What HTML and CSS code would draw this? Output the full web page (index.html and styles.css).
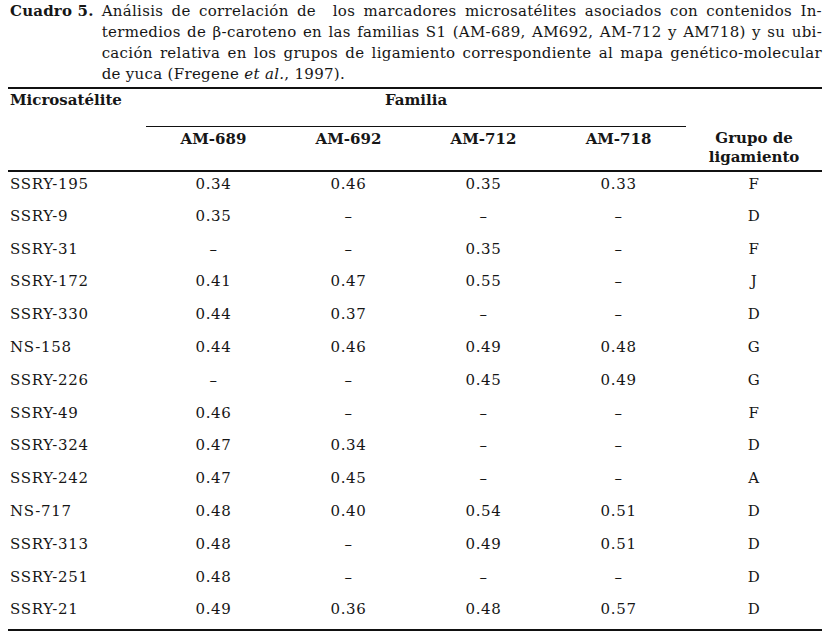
FILE: index.html
```html
<!DOCTYPE html>
<html lang="es">
<head>
<meta charset="utf-8">
<title>Cuadro 5</title>
<link rel="stylesheet" href="styles.css">
</head>
<body>
<div class="page">
  <div class="caption">
    <span class="label">Cuadro 5.</span>
    <p class="text">
      <span class="line jl">Análisis de correlación de&nbsp; los marcadores microsatélites asociados con contenidos In-</span>
      <span class="line jl">termedios de β-caroteno en las familias S1 (AM-689, AM692, AM-712 y AM718) y su ubi-</span>
      <span class="line jl">cación relativa en los grupos de ligamiento correspondiente al mapa genético-molecular</span>
      <span class="line">de yuca (Fregene <i>et al.</i>, 1997).</span>
    </p>
  </div>
  <table class="data">
    <colgroup>
      <col class="c-name">
      <col class="c-val"><col class="c-val"><col class="c-val"><col class="c-val">
      <col class="c-grp">
    </colgroup>
    <thead>
      <tr class="hrow1">
        <th class="left">Microsatélite</th>
        <th colspan="4" class="fam">Familia</th>
        <th></th>
      </tr>
      <tr class="hrow2">
        <th></th>
        <th>AM-689</th><th>AM-692</th><th>AM-712</th><th>AM-718</th>
        <th class="grp">Grupo de<br>ligamiento</th>
      </tr>
    </thead>
    <tbody>
      <tr><td class="left">SSRY-195</td><td>0.34</td><td>0.46</td><td>0.35</td><td>0.33</td><td>F</td></tr>
      <tr><td class="left">SSRY-9</td><td>0.35</td><td>–</td><td>–</td><td>–</td><td>D</td></tr>
      <tr><td class="left">SSRY-31</td><td>–</td><td>–</td><td>0.35</td><td>–</td><td>F</td></tr>
      <tr><td class="left">SSRY-172</td><td>0.41</td><td>0.47</td><td>0.55</td><td>–</td><td>J</td></tr>
      <tr><td class="left">SSRY-330</td><td>0.44</td><td>0.37</td><td>–</td><td>–</td><td>D</td></tr>
      <tr><td class="left">NS-158</td><td>0.44</td><td>0.46</td><td>0.49</td><td>0.48</td><td>G</td></tr>
      <tr><td class="left">SSRY-226</td><td>–</td><td>–</td><td>0.45</td><td>0.49</td><td>G</td></tr>
      <tr><td class="left">SSRY-49</td><td>0.46</td><td>–</td><td>–</td><td>–</td><td>F</td></tr>
      <tr><td class="left">SSRY-324</td><td>0.47</td><td>0.34</td><td>–</td><td>–</td><td>D</td></tr>
      <tr><td class="left">SSRY-242</td><td>0.47</td><td>0.45</td><td>–</td><td>–</td><td>A</td></tr>
      <tr><td class="left">NS-717</td><td>0.48</td><td>0.40</td><td>0.54</td><td>0.51</td><td>D</td></tr>
      <tr><td class="left">SSRY-313</td><td>0.48</td><td>–</td><td>0.49</td><td>0.51</td><td>D</td></tr>
      <tr><td class="left">SSRY-251</td><td>0.48</td><td>–</td><td>–</td><td>–</td><td>D</td></tr>
      <tr><td class="left">SSRY-21</td><td>0.49</td><td>0.36</td><td>0.48</td><td>0.57</td><td>D</td></tr>
    </tbody>
  </table>
</div>
</body>
</html>
```

FILE: styles.css
```css
html, body {
  margin: 0;
  padding: 0;
  background: #ffffff;
}
body {
  font-family: "DejaVu Serif", "Liberation Serif", serif;
  color: #161616;
  font-size: 15px;
}
.page {
  width: 814px;
  padding: 1px 0 0 8px;
}
.caption {
  display: flex;
  align-items: flex-start;
  gap: 8px;
  padding-left: 2px;
  line-height: 21px;
}
.label {
  font-weight: bold;
  white-space: nowrap;
  letter-spacing: 0.2px;
}
.text {
  margin: 0;
  flex: 1;
  letter-spacing: 0.3px;
}
.line {
  display: block;
  white-space: nowrap;
}
.line.jl {
  white-space: normal;
  text-align: justify;
  text-align-last: justify;
}
.data {
  width: 814px;
  margin-top: 2px;
  border-collapse: collapse;
  table-layout: fixed;
  border-top: 2px solid #111;
  border-bottom: 2px solid #111;
}
.c-name { width: 138px; }
.c-val { width: 135px; }
.c-grp { width: 136px; }
th, td {
  padding: 0;
  text-align: center;
  font-weight: normal;
  box-sizing: border-box;
}
th {
  font-weight: bold;
}
td {
  letter-spacing: 0.7px;
}
.left {
  text-align: left;
  padding-left: 2px;
}
.hrow1 th {
  height: 38px;
  vertical-align: top;
  padding-top: 2px;
}
.hrow1 .fam {
  border-bottom: 1.5px solid #111;
}
.hrow2 th {
  height: 45px;
  vertical-align: top;
  padding-top: 3px;
  line-height: 19px;
}
thead {
  border-bottom: 2px solid #111;
}
tbody td {
  height: 32.8px;
  vertical-align: top;
  padding-top: 3px;
}
```
